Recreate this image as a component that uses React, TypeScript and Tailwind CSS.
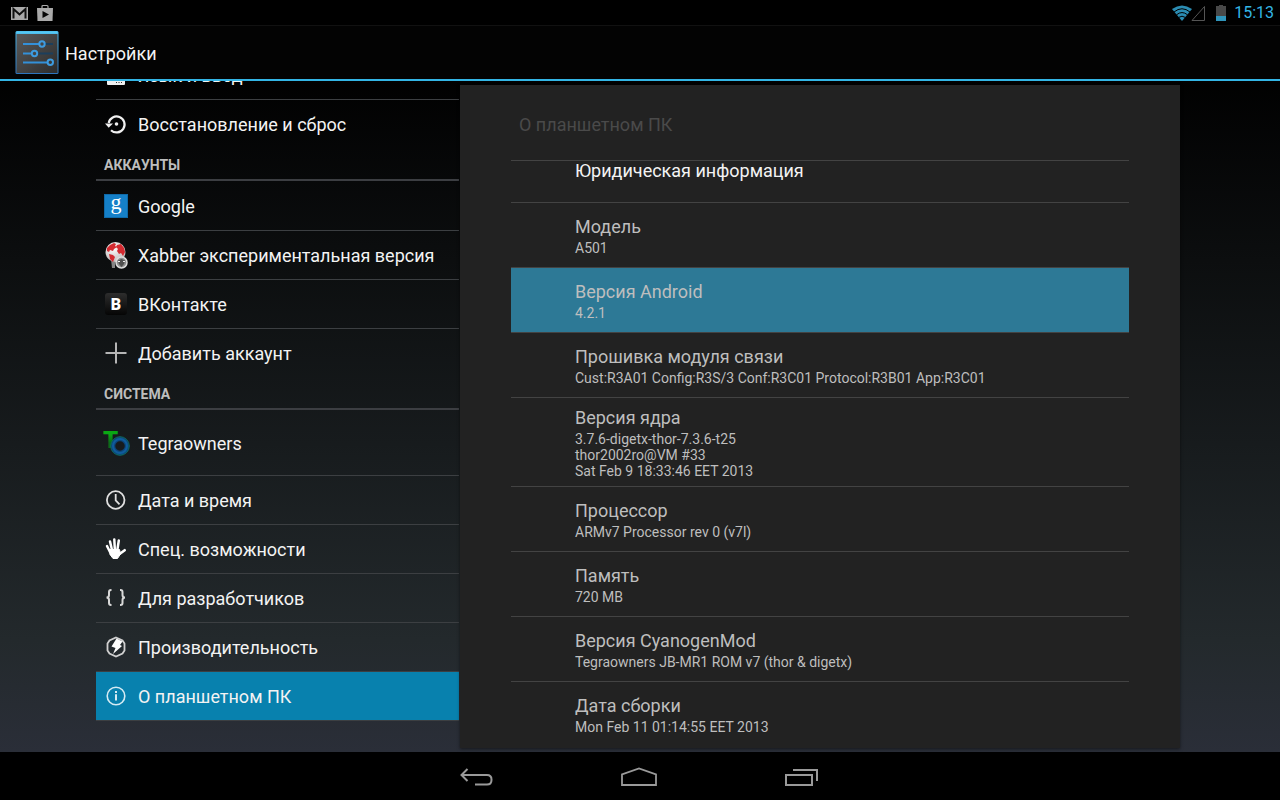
import type { ReactNode } from 'react';

interface MenuItem {
  label: string;
  icon: ReactNode;
  tall?: boolean;
  active?: boolean;
  last?: boolean;
}

interface InfoItem {
  title: string;
  lines: string[];
  active?: boolean;
}

const svg = 'block h-6 w-6 shrink-0';

const KeyboardIcon = () => (
  <svg viewBox="0 0 24 24" className={svg}>
    <rect x="3" y="5" width="18" height="17" rx="1" fill="#f0f0f0" />
    <path d="M12.500 19v1M15 19v1M17.500 19v1M12.500 17v1M15 17v1" stroke="#333" />
  </svg>
);

const ResetIcon = () => (
  <svg viewBox="0 0 24 24" className={svg} fill="none" stroke="#f0f0f0" strokeWidth="2.200">
    <path d="M4.700 11A8 8 0 1 1 7 18.200" />
    <path d="M1 11.500h8L4.700 15.800z" fill="#f0f0f0" stroke="none" />
    <circle cx="12.500" cy="12" r="1.800" fill="#f0f0f0" stroke="none" />
  </svg>
);

const GoogleIcon = () => (
  <svg viewBox="0 0 24 24" className={svg}>
    <rect width="24" height="24" fill="#0f6aa8" />
    <rect x="1" y="1" width="22" height="22" fill="#1580c8" />
    <text x="12" y="15" textAnchor="middle" fontSize="22" fontFamily="Liberation Serif, serif" fill="#fff">g</text>
  </svg>
);

const XabberIcon = () => (
  <svg viewBox="0 0 24 28" className="block h-7 w-6 shrink-0">
    <defs>
      <radialGradient id="globe" cx="0.400" cy="0.300" r="0.800">
        <stop offset="0" stopColor="#fff" />
        <stop offset="1" stopColor="#b9b0b0" />
      </radialGradient>
    </defs>
    <path d="M7 18h4v9H8z" fill="#858585" />
    <circle cx="11.500" cy="11" r="10" fill="url(#globe)" />
    <path d="M3 7l3-3 4-2 2 1-1 2 2 1-3 2-1 2-3-1-1 2-2-1zM13 4l4-1 3 4 1 4-2 4-2-3-2 1-2-3 1-2-2-2zM5 13l4 1 2 2-2 5-3-3z" fill="#d32a30" />
    <circle cx="17.500" cy="21.500" r="5.500" fill="#8f8f8f" stroke="#dcdcdc" strokeWidth="1.500" />
    <path d="M14 19.500l3.500-1.500 3.500 1.500-1 3.500-2.500 3-2.500-3z" fill="#4f4f4f" />
    <path d="M14 20.500h2M19 20.500h2" stroke="#f0f0f0" />
  </svg>
);

const VkIcon = () => (
  <svg viewBox="0 0 24 24" className={svg}>
    <defs>
      <linearGradient id="vk" x1="0" y1="0" x2="0" y2="1">
        <stop offset="0" stopColor="#2d2d2d" />
        <stop offset="1" stopColor="#050505" />
      </linearGradient>
    </defs>
    <rect x="1" y="1" width="22" height="22" rx="3" fill="url(#vk)" />
    <text x="12" y="17.500" textAnchor="middle" fontSize="16" fontWeight="900" fill="#fff">B</text>
  </svg>
);

const PlusIcon = () => (
  <svg viewBox="0 0 24 24" className={svg}>
    <path d="M12 1.500v21M1.500 12h21" stroke="#b5b5b5" strokeWidth="2" />
  </svg>
);

const TegraIcon = () => (
  <svg viewBox="0 0 28 28" className="block h-7 w-7 shrink-0">
    <defs>
      <linearGradient id="tegra" x1="0" y1="0" x2="0" y2="1">
        <stop offset="0.300" stopColor="#0aa814" />
        <stop offset="0.600" stopColor="#0b6a1a" />
      </linearGradient>
    </defs>
    <text x="8.500" y="19" textAnchor="middle" fontSize="24" fontWeight="900" fill="url(#tegra)">T</text>
    <circle cx="18" cy="17" r="7" fill="none" stroke="#0d4478" strokeWidth="4.500" />
    <circle cx="18" cy="17" r="9.300" fill="none" stroke="#0c6b62" strokeWidth="1" />
    <circle cx="18" cy="17" r="7" fill="none" stroke="#0f5c9c" strokeWidth="2" />
  </svg>
);

const ClockIcon = () => (
  <svg viewBox="0 0 24 24" className={svg} fill="none" stroke="#e0e0e0" strokeWidth="1.800">
    <circle cx="11.700" cy="12" r="8.800" />
    <path d="M11.700 6v6.500l3.800 3.800" />
  </svg>
);

const HandIcon = () => (
  <svg viewBox="0 0 24 24" className={svg} fill="none" stroke="#fff" strokeLinecap="round">
    <path d="M8 13L6 4.500M10.800 12l-.500-9.500M13.500 12l1.300-8.500M6 15L3 9" strokeWidth="2.500" />
    <path d="M15.500 17L20.700 13.200" strokeWidth="2.600" />
    <path d="M6 12.500h9.500l1 4.500-3 4.500H9l-3-4z" fill="#fff" strokeLinejoin="round" />
  </svg>
);

const BracesIcon = () => (
  <svg viewBox="0 0 24 24" className={svg} fill="none" stroke="#d8d8d8" strokeWidth="2">
    <path d="M7.500 4H7q-2 0-2 2v3q0 2.500-2.500 2.500Q5 11.500 5 14v3q0 2 2 2h.500M16 4h.500q2 0 2 2v3q0 2.500 2.500 2.500-2.500 0-2.500 2.500v3q0 2-2 2H16" />
  </svg>
);

const PerformanceIcon = () => (
  <svg viewBox="0 0 24 24" className={svg}>
    <path d="M12 2.500l6.500 3 2 3v7l-2 3-6.500 3-6.500-3-2-3v-7l2-3z" fill="none" stroke="#d0d0d0" strokeWidth="1.800" />
    <path d="M12.500 3.500l6 3-2.500 3.500 2 1-9 8 2.500-6-4-1.500z" fill="#fff" />
  </svg>
);

const InfoIcon = () => (
  <svg viewBox="0 0 24 24" className={svg} fill="none" stroke="#d5ebf3">
    <circle cx="12" cy="12" r="8.800" strokeWidth="1.600" />
    <path d="M12 10.200v6.300M12 7v2" strokeWidth="2" />
  </svg>
);

const accounts: MenuItem[] = [
  { label: 'Google', icon: <GoogleIcon /> },
  { label: 'Xabber экспериментальная версия', icon: <XabberIcon /> },
  { label: 'ВКонтакте', icon: <VkIcon /> },
  { label: 'Добавить аккаунт', icon: <PlusIcon />, last: true },
];

const system: MenuItem[] = [
  { label: 'Tegraowners', icon: <TegraIcon />, tall: true },
  { label: 'Дата и время', icon: <ClockIcon /> },
  { label: 'Спец. возможности', icon: <HandIcon /> },
  { label: 'Для разработчиков', icon: <BracesIcon /> },
  { label: 'Производительность', icon: <PerformanceIcon /> },
  { label: 'О планшетном ПК', icon: <InfoIcon />, active: true },
];

const info: InfoItem[] = [
  { title: 'Модель', lines: ['A501'] },
  { title: 'Версия Android', lines: ['4.2.1'], active: true },
  { title: 'Прошивка модуля связи', lines: ['Cust:R3A01 Config:R3S/3 Conf:R3C01 Protocol:R3B01 App:R3C01'] },
  { title: 'Версия ядра', lines: ['3.7.6-digetx-thor-7.3.6-t25', 'thor2002ro@VM #33', 'Sat Feb 9 18:33:46 EET 2013'] },
  { title: 'Процессор', lines: ['ARMv7 Processor rev 0 (v7l)'] },
  { title: 'Память', lines: ['720 MB'] },
  { title: 'Версия CyanogenMod', lines: ['Tegraowners JB-MR1 ROM v7 (thor & digetx)'] },
  { title: 'Дата сборки', lines: ['Mon Feb 11 01:14:55 EET 2013'] },
];

function MenuRow({ label, icon, tall, active, last }: MenuItem) {
  return (
    <button
      type="button"
      className={`flex w-full shrink-0 items-center gap-2 border-b pl-2 text-left text-lg text-[#f3f3f3] ${
        tall ? 'h-[65px]' : 'h-[49px]'
      } ${last ? 'border-transparent' : 'border-[#3c3f42]'} ${active ? 'bg-[#0881ae]' : ''}`}
    >
      <span className="flex w-6 shrink-0 justify-center">{icon}</span>
      <span className="pt-0.5 pl-0.5">{label}</span>
    </button>
  );
}

function SectionHeader({ children }: { children: ReactNode }) {
  return (
    <h2 className="mb-px flex h-8 items-center border-b-2 border-[#3c3e42] pt-0.5 pl-2 text-sm font-bold text-[#bdbdbd]">
      {children}
    </h2>
  );
}

function InfoRow({ title, lines, active }: InfoItem) {
  return (
    <button
      type="button"
      className={`flex w-full shrink-0 flex-col justify-center border-b border-[#434343] pl-16 text-left text-[#bebebe] last:border-transparent ${
        lines.length > 1 ? 'h-[89px]' : 'h-[65px]'
      } ${active ? 'bg-[#2d7996]' : ''}`}
    >
      <span className="text-lg leading-[26px]">{title}</span>
      {lines.map((line) => (
        <span key={line} className="text-sm leading-4">{line}</span>
      ))}
    </button>
  );
}

function StatusBar() {
  return (
    <div className="flex h-[25px] shrink-0 items-center justify-between bg-black pr-1.5 pl-2.5">
      <div className="flex items-center gap-2">
        <svg viewBox="0 0 18 18" className="h-[18px] w-[18px]">
          <path d="M1 3h17v13H1z" fill="#aaa" />
          <path d="M3.500 14.500V5l6 5.500 6-5.500v9.500" fill="none" stroke="#111" strokeWidth="2" />
        </svg>
        <svg viewBox="0 0 18 18" className="h-[18px] w-[18px]">
          <path d="M6 5V2.500q0-1 1-1h4q1 0 1 1V5" fill="none" stroke="#aaa" strokeWidth="1.200" />
          <path d="M1 4h16l-.500 13h-15z" fill="#aaa" />
          <path d="M6.500 7l6.500 3.500L6.500 14z" fill="#050505" />
        </svg>
      </div>
      <div className="flex items-center">
        <svg viewBox="0 0 36 18" className="h-[18px] w-9">
          <path d="M0 5Q10 -2 20 5L10 17z" fill="#2b8cb2" />
          <path d="M2 8q8-6.500 16 0M4.500 10.800q5.500-4.500 11 0M7 13.300q3-2.200 6 0" fill="none" stroke="#000" strokeWidth="1" />
          <path d="M20 16.500h12.500v-14z" fill="none" stroke="#555" />
        </svg>
        <svg viewBox="0 0 10 18" className="mr-2 ml-2 h-[18px] w-2.5">
          <path d="M0 2h3V1h4v1h3v15H0z" fill="#484848" />
          <path d="M0 12h10v5H0z" fill="#3095bb" />
        </svg>
        <span className="text-base text-[#33b5e5]">15:13</span>
      </div>
    </div>
  );
}

function ActionBar() {
  return (
    <header className="flex h-14 shrink-0 items-center gap-1.5 border-t border-b-2 border-t-[#111] border-b-[#33b5e5] bg-[#030303] pl-[15px]">
      <svg viewBox="0 0 44 44" className="h-11 w-11">
        <defs>
          <linearGradient id="tile" x1="0" y1="0" x2="1" y2="1">
            <stop offset="0" stopColor="#5a5a5a" />
            <stop offset="1" stopColor="#2c2c2c" />
          </linearGradient>
          <linearGradient id="rim" x1="0" y1="0" x2="0" y2="1">
            <stop offset="0" stopColor="#4cb9ea" />
            <stop offset="1" stopColor="#2d74bd" />
          </linearGradient>
        </defs>
        <rect x="0.500" y="0" width="43" height="43" rx="1.500" fill="url(#rim)" />
        <rect x="1.500" y="3" width="41" height="39" fill="url(#tile)" />
        <path d="M1.500 1.500h41" stroke="#55c8f2" strokeWidth="2" />
        <g strokeWidth="2" fill="none">
          <path d="M30 13h8M23 22.500h15" stroke="#1c3f5c" />
          <path d="M8 13h16M8 22.500h8M8 31.500h24" stroke="#3390d8" />
          <circle cx="27" cy="13" r="2.700" stroke="#3d9be0" />
          <circle cx="19.500" cy="22.500" r="2.700" stroke="#3d9be0" />
          <circle cx="35.300" cy="31.300" r="2.700" stroke="#3d9be0" />
        </g>
      </svg>
      <h1 className="pt-0.5 text-lg text-[#f3f3f3]">Настройки</h1>
    </header>
  );
}

function NavBar() {
  return (
    <nav className="flex h-12 shrink-0 items-center justify-center gap-[122px] bg-black pt-1 pr-0.5">
      <button type="button" aria-label="Назад">
        <svg viewBox="0 0 40 24" className="h-6 w-10" fill="none" stroke="#9a9a9a" strokeWidth="2">
          <path d="M10.500 3L4.500 9l6 6M4.500 9H30q4.500 0 4.500 4.500v.500q0 4.500-4.500 4.500H18" />
        </svg>
      </button>
      <button type="button" aria-label="Домой">
        <svg viewBox="0 0 40 24" className="h-6 w-10" fill="none" stroke="#9a9a9a" strokeWidth="1.800">
          <path d="M3 19V8.500L20 2.500l17 6V19z" />
        </svg>
      </button>
      <button type="button" aria-label="Недавние">
        <svg viewBox="0 0 40 24" className="h-6 w-10" fill="none" stroke="#9a9a9a" strokeWidth="2">
          <path d="M5 9h26v10H5zM12 4h24v11" />
        </svg>
      </button>
    </nav>
  );
}

export default function App() {
  return (
    <div className="flex h-screen flex-col overflow-hidden bg-[linear-gradient(#000_8%,#23292c_80%,#2a2e38_94%)] font-[Roboto,sans-serif]">
      <StatusBar />
      <ActionBar />
      <main className="grid min-h-0 flex-1 grid-cols-[364fr_720fr] pr-[100px] pl-24">
        <aside className="min-h-0 overflow-hidden pr-px">
          {/* list is scrolled, only the end of this row is visible */}
          <div className="flex h-[19px] flex-col justify-end overflow-hidden">
            <MenuRow label="Язык и ввод" icon={<KeyboardIcon />} />
          </div>
          <MenuRow label="Восстановление и сброс" icon={<ResetIcon />} last />
          <SectionHeader>АККАУНТЫ</SectionHeader>
          {accounts.map((item) => (
            <MenuRow key={item.label} {...item} />
          ))}
          <SectionHeader>СИСТЕМА</SectionHeader>
          {system.map((item) => (
            <MenuRow key={item.label} {...item} />
          ))}
        </aside>

        <section className="mt-1 mb-1 flex min-h-0 flex-col overflow-hidden bg-[#222] px-[51px] shadow-[0_1px_3px_rgba(0,0,0,0.5)]">
          <h2 className="flex h-[76px] shrink-0 items-center border-b border-[#434343] pt-1 pl-2 text-lg text-[#4a4a4a]">
            О планшетном ПК
          </h2>
          <button
            type="button"
            className="flex h-[42px] w-full shrink-0 items-start border-b border-[#434343] pl-16 text-left text-lg leading-5 text-[#f3f3f3]"
          >
            Юридическая информация
          </button>
          {info.map((item) => (
            <InfoRow key={item.title} {...item} />
          ))}
        </section>
      </main>
      <NavBar />
    </div>
  );
}
